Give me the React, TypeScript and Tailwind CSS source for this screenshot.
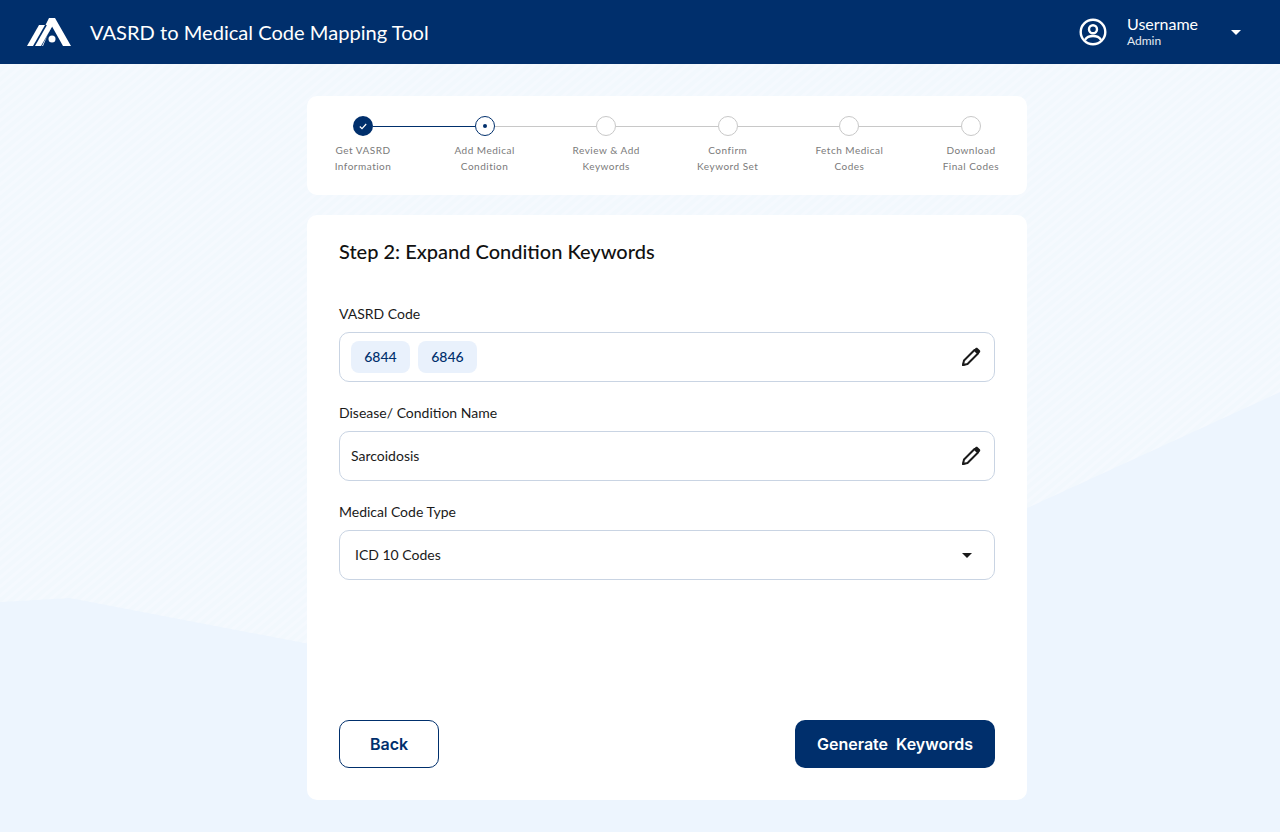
import React from "react";

const steps = [
  ["Get VASRD", "Information"],
  ["Add Medical", "Condition"],
  ["Review & Add", "Keywords"],
  ["Confirm", "Keyword Set"],
  ["Fetch Medical", "Codes"],
  ["Download", "Final Codes"],
];

function Logo() {
  return (
    <svg width="44" height="28" viewBox="0 0 44 28" fill="white" className="shrink-0">
      <polygon points="0,28 6,28 18,7 12,7" />
      <polygon points="8,28 14,28 26,7 20,7" />
      <polygon points="18.5,7 22,0 28,0 44,28 36,28 24.5,7.5 16,28 15,28 25,8" />
      <circle cx="25" cy="21" r="3.5" />
    </svg>
  );
}

function Pencil() {
  return (
    <svg width="20" height="20" viewBox="0 0 20 20" fill="none" className="shrink-0">
      <path d="M2 18 L3 13.5 L13.5 3 L17 6.5 L6.5 17 Z" stroke="#1a1a1a" strokeWidth="2" strokeLinejoin="round" />
      <path d="M1 19 L1.8 15.5 L4.5 18.2 Z" fill="#1a1a1a" />
      <path d="M13 2.5 L14.5 1.2 C15.2 .6 16 .6 16.7 1.2 L18.8 3.3 C19.4 4 19.4 4.8 18.8 5.5 L17.5 7 Z" fill="#1a1a1a" />
    </svg>
  );
}

function Caret({ color }: { color: string }) {
  return (
    <svg width="10" height="5" viewBox="0 0 10 5" className="shrink-0">
      <polygon points="0,0 10,0 5,5" fill={color} />
    </svg>
  );
}

function Field({ label, children, right }: { label: string; children: React.ReactNode; right: React.ReactNode }) {
  return (
    <div className="flex flex-col">
      <div className="text-[14px] leading-[17px] text-[#1a1a1a] mb-[10px]">{label}</div>
      <div className="h-[50px] border border-[#c9d4e3] rounded-[10px] bg-white flex items-center justify-between">
        {children}
        {right}
      </div>
    </div>
  );
}

export default function App() {
  return (
    <div className="relative w-full h-[832px] overflow-hidden bg-[#edf5fe] font-['Lato',sans-serif]">
      <svg className="absolute left-0 top-0" width="1280" height="832" viewBox="0 0 1280 832">
        <defs>
          <pattern id="stripes" width="7" height="7" patternUnits="userSpaceOnUse" patternTransform="rotate(-40)">
            <rect width="7" height="3" fill="#f5f9fe" />
          </pattern>
        </defs>
        <polygon points="0,64 1280,64 1280,392 1027,508 940,546 310,644 70,598 0,602" fill="#f2f8fd" />
        <polygon points="0,64 1280,64 1280,392 1027,508 940,546 310,644 70,598 0,602" fill="url(#stripes)" />
      </svg>

      <header className="relative h-16 bg-[#002f6c] flex items-center pl-[27px] pr-[39px] text-white">
        <Logo />
        <div className="ml-[19px] text-[20.1px] leading-[28px]">VASRD to Medical Code Mapping Tool</div>
        <div className="ml-auto flex items-center">
          <svg width="28" height="28" viewBox="0 0 28 28" fill="none" stroke="white" strokeWidth="2.4" className="shrink-0">
            <circle cx="14" cy="14" r="12.3" />
            <circle cx="14" cy="11.3" r="4" />
            <path d="M6 21.8 C8 18.6 11 18 14 18 C17 18 20 18.6 22 21.8" />
          </svg>
          <div className="ml-[20px] w-[104px] flex flex-col mb-[2px]">
            <div className="text-[16px] leading-[20px]">Username</div>
            <div className="text-[12px] leading-[14px] text-[#e4eaf2]">Admin</div>
          </div>
          <Caret color="white" />
        </div>
      </header>

      <main className="relative w-[720px] ml-[307px] pt-8 flex flex-col gap-5">
        <section className="h-[99px] bg-white rounded-[10px] pt-5">
          <div className="flex items-center px-[46px]">
            {steps.map((_, i) => (
              <React.Fragment key={i}>
                {i > 0 && <div className={`flex-1 h-px ${i === 1 ? "bg-[#002f6c]" : "bg-[#c8c8c8]"}`} />}
                {i === 0 ? (
                  <div className="w-5 h-5 rounded-full bg-[#002f6c] flex items-center justify-center">
                    <svg width="8" height="7" viewBox="0 0 8 7" fill="none" stroke="white" strokeWidth="1.2">
                      <path d="M.8 3.5 L3 5.6 L7.2 1" />
                    </svg>
                  </div>
                ) : i === 1 ? (
                  <div className="w-5 h-5 rounded-full border border-[#002f6c] flex items-center justify-center">
                    <div className="w-[4px] h-[4px] rounded-full bg-[#002f6c]" />
                  </div>
                ) : (
                  <div className="w-5 h-5 rounded-full border border-[#c8c8c8]" />
                )}
              </React.Fragment>
            ))}
          </div>
          <div className="flex justify-between px-[11px] mt-[6px]">
            {steps.map((s, i) => (
              <div key={i} className="w-[90px] text-center text-[10px] leading-[16px] tracking-[0.5px] text-[#7a7a7a]">
                <div>{s[0]}</div>
                <div>{s[1]}</div>
              </div>
            ))}
          </div>
        </section>

        <section className="h-[585px] bg-white rounded-[10px] px-8 pt-[23px] pb-8 flex flex-col">
          <h1 className="text-[20px] leading-[26px] font-medium text-[#111]">Step 2: Expand Condition Keywords</h1>
          <div className="mt-[41px] flex flex-col gap-[22px]">
            <Field label="VASRD Code" right={<div className="mr-[13px]"><Pencil /></div>}>
              <div className="flex gap-2 pl-[11px]">
                {["6844", "6846"].map((c) => (
                  <span key={c} className="h-8 w-[59px] pb-[2px] rounded-lg bg-[#e9f1fc] flex items-center justify-center text-[14px] font-medium text-[#002f6c]">{c}</span>
                ))}
              </div>
            </Field>
            <Field label="Disease/ Condition Name" right={<div className="mr-[13px]"><Pencil /></div>}>
              <span className="pl-[11px] pb-[2px] text-[14px] text-[#1a1a1a]">Sarcoidosis</span>
            </Field>
            <Field label="Medical Code Type" right={<div className="mr-[22px]"><Caret color="#1a1a1a" /></div>}>
              <span className="pl-[15px] pb-[2px] text-[14px] text-[#1a1a1a]">ICD 10 Codes</span>
            </Field>
          </div>
          <div className="mt-auto flex justify-between font-['Inter',sans-serif]">
            <button className="w-[100px] h-12 rounded-[10px] border border-[#002f6c] bg-white text-[16px] font-semibold text-[#002f6c]">Back</button>
            <button className="w-[200px] h-12 rounded-[10px] bg-[#002f6c] text-[16px] font-semibold text-white [word-spacing:4px]">Generate Keywords</button>
          </div>
        </section>
      </main>
    </div>
  );
}
